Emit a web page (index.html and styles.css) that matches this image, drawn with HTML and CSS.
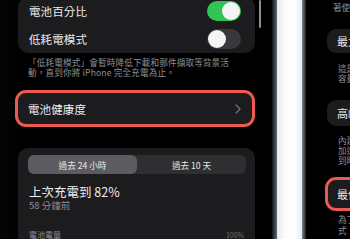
FILE: index.html
```html
<!DOCTYPE html>
<html lang="zh-Hant">
<head>
<meta charset="utf-8">
<link rel="stylesheet" href="styles.css">
</head>
<body>
<div class="stage">
  <div class="phone left">
    <div class="scrollbar"></div>
    <div class="card group">
      <div class="row"><span class="label">電池百分比</span><span class="toggle on"><span class="knob"></span></span></div>
      <div class="row"><span class="label">低耗電模式</span><span class="toggle off"><span class="knob"></span></span></div>
    </div>
    <p class="foot">「低耗電模式」會暫時降低下載和郵件擷取等背景活動，直到你將 iPhone 完全充電為止。</p>
    <div class="card health">
      <span class="label">電池健康度</span>
      <svg class="chev" width="6" height="10" viewBox="0 0 6 10"><path d="M1 1l4 4-4 4" fill="none" stroke="#6e6e73" stroke-width="1.4" stroke-linecap="round" stroke-linejoin="round"/></svg>
    </div>
    <div class="card usage">
      <div class="seg">
        <span class="seg-item active">過去 24 小時</span>
        <span class="seg-item">過去 10 天</span>
      </div>
      <div class="last">上次充電到 82%</div>
      <div class="ago">58 分鐘前</div>
      <div class="level-row"><span class="level">電池電量</span><span class="pct">100%</span></div>
    </div>
  </div>
  <div class="gap">
    <div class="bezel-l"></div>
    <div class="white"></div>
    <div class="bezel-r"></div>
  </div>
  <div class="phone right">
    <p class="rtext top">著使用時間增加</p>
    <div class="rcard c1">最大容量</div>
    <p class="rtext d1">這是相對於新電池時的電池<br>容量測量</p>
    <div class="rcard c2">高峰效能容量</div>
    <p class="rtext d2">內建電池的高峰效能正常<br>加速老化的電池可能無法<br>到時效能會變差</p>
    <div class="rcard c3">最佳化電池充電</div>
    <p class="rtext d3">為了減緩電池老化<br>式</p>
  </div>
</div>
</body>
</html>
```
FILE: styles.css
```css
* { box-sizing: border-box; margin: 0; padding: 0; }
html, body { width: 350px; height: 239px; overflow: hidden; background: #000; }
body { font-family: "Noto Sans CJK TC", "Noto Sans", sans-serif; color: #ececee; }
.stage { display: flex; width: 350px; height: 239px; overflow: hidden; }
.phone { position: relative; background: #000; overflow: hidden; height: 239px; }
.left { width: 272px; flex: none; padding-left: 18px; padding-right: 17px; background: linear-gradient(90deg, #060606 0, #020202 16px, #000 18px); }
.scrollbar { position: absolute; left: 259px; top: 0; width: 2px; height: 28px; border-radius: 1px; background: #8d8d92; }
.card { background: #1c1c1e; border-radius: 10px; }
.group { margin-top: -3px; padding: 0 14px 0 11px; }
.row { height: 28px; display: flex; align-items: center; justify-content: space-between; }
.label { font-size: 11.5px; line-height: 14px; letter-spacing: 0.1px; }
.toggle { position: relative; width: 34px; height: 20px; border-radius: 10px; display: block; }
.toggle.on { background: #30c552; }
.toggle.off { background: #39393d; }
.knob { position: absolute; top: 1px; width: 18px; height: 18px; border-radius: 50%; background: #f4f4f4; }
.on .knob { right: 1px; }
.off .knob { left: 1px; }
.foot { margin-top: 4px; padding: 0 24px 0 10px; font-size: 8.6px; line-height: 10px; color: #8e8e93; letter-spacing: 0.15px; }
.health { margin: 13px 0 0 -3px; height: 37px; border: 3.5px solid #ee5a4f; border-radius: 11px; display: flex; align-items: center; justify-content: space-between; padding: 0 11px 0 10px; }
.usage { margin-top: 21px; padding: 7px 9px 0 10px; height: 100px; }
.seg { display: flex; height: 19px; background: #2f2f32; border-radius: 6px; }
.seg-item { flex: 1; display: flex; align-items: center; justify-content: center; font-size: 8.6px; color: #e6e6e8; border-radius: 6px; }
.seg-item.active { background: #5c5c60; }
.last { margin-top: 10px; font-size: 12.5px; line-height: 15px; padding-left: 1px; }
.ago { margin-top: 1px; font-size: 9.5px; line-height: 11px; color: #8e8e93; padding-left: 1px; }
.level-row { margin-top: 16px; display: flex; justify-content: space-between; align-items: baseline; padding-right: 2px; }
.level { font-size: 8px; line-height: 10px; color: #8e8e93; padding-left: 1px; }
.pct { font-size: 7px; line-height: 10px; color: #6e6e73; margin-top: 3px; }
.gap { width: 34px; flex: none; display: flex; }
.bezel-l { width: 5px; background: linear-gradient(90deg, #101418, #5f6a74); }
.white { width: 25px; background: linear-gradient(90deg, #e4e9ee, #fbfcfd 30%, #ffffff 70%, #e9edf1); }
.bezel-r { width: 4px; background: linear-gradient(90deg, #7d868e, #1a1e22); }
.right { flex: 1; padding-left: 21px; white-space: nowrap; }
.rtext { font-size: 8.6px; line-height: 10px; color: #8e8e93; overflow: hidden; white-space: nowrap; width: 200px; }
.top { margin-top: 2px; margin-left: 6px; height: 10px; }
.rcard { background: #1c1c1e; border-radius: 9px; font-size: 11px; display: flex; align-items: center; padding-left: 10px; width: 200px; }
.c1 { margin-top: 17px; height: 24px; }
.d1 { margin-top: 10px; padding-left: 11px; height: 20px; }
.c2 { margin-top: 17px; height: 26px; }
.d2 { margin-top: 9px; padding-left: 11px; height: 30px; }
.c3 { margin: 12px 0 0 -2px; height: 34px; border: 3.5px solid #ee5a4f; border-radius: 11px; padding-left: 9px; }
.d3 { margin-top: 3px; padding-left: 11px; line-height: 11px; }
```
